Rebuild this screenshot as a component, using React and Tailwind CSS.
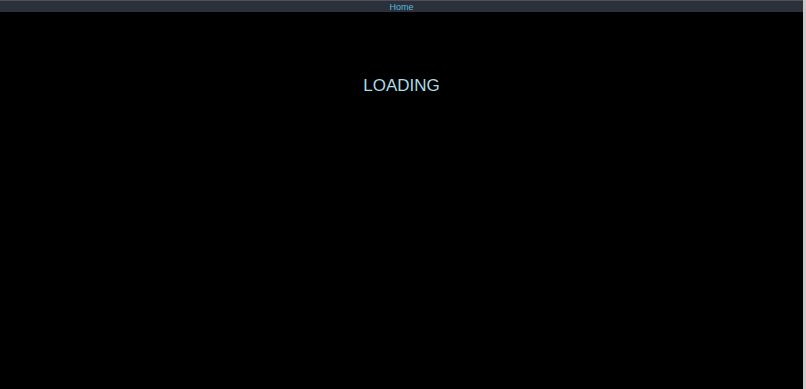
import React from 'react';

const App = () => {
    return (
        <div className='flex w-full h-[389px] bg-black overflow-hidden'>
            <div className='flex-1 flex flex-col'>
                {/* Top nav */}
                <nav className='h-[12px] bg-[#2b303b] border-t border-[#4b515c] flex items-center justify-center'>
                    <a href='#' className='text-[9px] leading-none text-[#5ab8da] pt-[1px]' style={{ fontFamily: '"Liberation Sans", Arial, sans-serif' }}>Home</a>
                </nav>

                {/* Loading */}
                <div className='flex justify-center pt-[65px]'>
                    <h1 className='text-[17px] leading-none text-[#a9dbe8]' style={{ fontFamily: '"Liberation Sans", Arial, sans-serif' }}>LOADING</h1>
                </div>
            </div>
            <div className='w-[3px] bg-[#c9c9c9]'></div>
        </div>
    )
}

export default App;
